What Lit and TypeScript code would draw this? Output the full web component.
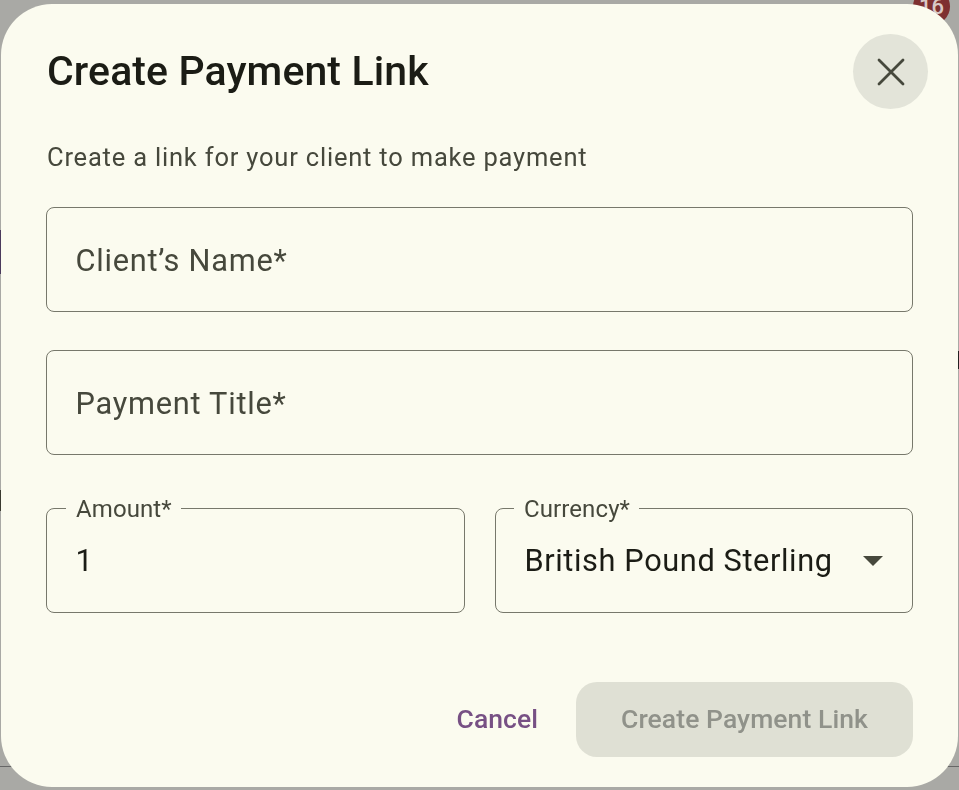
import { LitElement, html, css } from "lit";
import { customElement } from "lit/decorators.js";

@customElement("app-root")
export class AppRoot extends LitElement {
  static styles = css`
    :host {
      display: block;
      width: 959px;
      height: 790px;
      font-family: Roboto, "Liberation Sans", sans-serif;
    }
    .scrim {
      position: relative;
      width: 959px;
      height: 790px;
      box-sizing: border-box;
      padding: 4px 1px 3px 1px;
      background: #a9a9a5;
      overflow: hidden;
    }
    .badge {
      position: absolute;
      top: -12px;
      left: 913px;
      width: 37px;
      height: 37px;
      border-radius: 50%;
      background: #7e3030;
      color: #d9c9c6;
      font-size: 22px;
      font-weight: 500;
      line-height: 37px;
      text-align: center;
    }
    .mark {
      position: absolute;
    }
    .m1 { left: 0; top: 230px; width: 1px; height: 44px; background: #4a3a5c; }
    .m2 { left: 0; top: 490px; width: 1px; height: 21px; background: #3a3a30; }
    .m3 { left: 958px; top: 351px; width: 1px; height: 18px; background: #222; }
    .m4 { left: 0; top: 766px; width: 12px; height: 1px; background: #666; }
    .m5 { left: 945px; top: 766px; width: 14px; height: 1px; background: #666; }
    .dialog {
      position: relative;
      box-sizing: border-box;
      height: 783px;
      border-radius: 51px;
      background: #fbfbef;
      padding: 30px 45px 30px 45px;
      display: flex;
      flex-direction: column;
      will-change: transform;
    }
    .head {
      display: flex;
      justify-content: space-between;
      align-items: center;
      height: 75px;
      margin-right: -15px;
    }
    h1 {
      margin: 0 0 0 1px;
      font-size: 41px;
      line-height: 75px;
      letter-spacing: 0.1px;
      font-weight: 500;
      color: #1b1c15;
    }
    .close {
      width: 75px;
      height: 75px;
      border-radius: 50%;
      background: #e3e4d9;
      display: flex;
      align-items: center;
      justify-content: center;
    }
    .close svg { width: 28px; height: 28px; display: block; }
    .sub {
      margin: 30px 0 0 1px;
      font-size: 25.5px;
      line-height: 36px;
      letter-spacing: 0.8px;
      color: #46483c;
    }
    .field {
      position: relative;
      box-sizing: border-box;
      height: 105px;
      border: 1.5px solid #77786b;
      border-radius: 8px;
      display: flex;
      align-items: center;
      padding: 0 28.5px;
      font-size: 30.75px;
      letter-spacing: 0.75px;
      color: #46483c;
    }
    .text { padding-top: 2px; }
    .f1 { margin-top: 32px; }
    .f2 { margin-top: 38px; }
    .row {
      display: grid;
      grid-template-columns: 419px 418px;
      gap: 30px;
      margin-top: 53px;
    }
    .legend {
      position: absolute;
      top: -13px;
      left: 19px;
      padding: 0 9px 0 10px;
      background: #fbfbef;
      font-size: 24px;
      line-height: 27px;
      letter-spacing: 0.1px;
      color: #46483c;
    }
    .select .legend { left: 18px; }
    .value { color: #1b1c15; letter-spacing: 0.6px; }
    .select { justify-content: space-between; padding-right: 29px; }
    .arrow {
      width: 0;
      height: 0;
      border-left: 10px solid transparent;
      border-right: 10px solid transparent;
      border-top: 10px solid #46483c;
    }
    .actions {
      margin-top: auto;
      display: flex;
      justify-content: flex-end;
      align-items: center;
      gap: 38px;
    }
    .cancel {
      font-size: 26.5px;
      font-weight: 500;
      letter-spacing: 0.05px;
      color: #775084;
      padding-bottom: 2px;
    }
    .submit {
      width: 337px;
      height: 75px;
      border-radius: 21px;
      background: #dfe0d4;
      color: #90928a;
      font-size: 26.5px;
      font-weight: 500;
      letter-spacing: 0.08px;
      padding-bottom: 2px;
      box-sizing: border-box;
      display: flex;
      align-items: center;
      justify-content: center;
    }
  `;

  render() {
    return html`
      <div class="scrim">
        <div class="badge">16</div>
        <div class="mark m1"></div>
        <div class="mark m2"></div>
        <div class="mark m3"></div>
        <div class="mark m4"></div>
        <div class="mark m5"></div>
        <div class="dialog">
          <div class="head">
            <h1>Create Payment Link</h1>
            <div class="close">
              <svg viewBox="0 0 28 28" fill="none" stroke="#46483c" stroke-width="2.8" stroke-linecap="round">
                <path d="M2 2 L26 26 M26 2 L2 26"></path>
              </svg>
            </div>
          </div>
          <p class="sub">Create a link for your client to make payment</p>
          <div class="field f1"><span class="text">Client’s Name*</span></div>
          <div class="field f2"><span class="text">Payment Title*</span></div>
          <div class="row">
            <div class="field">
              <span class="legend">Amount*</span>
              <span class="value">1</span>
            </div>
            <div class="field select">
              <span class="legend">Currency*</span>
              <span class="value">British Pound Sterling</span>
              <span class="arrow"></span>
            </div>
          </div>
          <div class="actions">
            <span class="cancel">Cancel</span>
            <div class="submit">Create Payment Link</div>
          </div>
        </div>
      </div>
    `;
  }
}
